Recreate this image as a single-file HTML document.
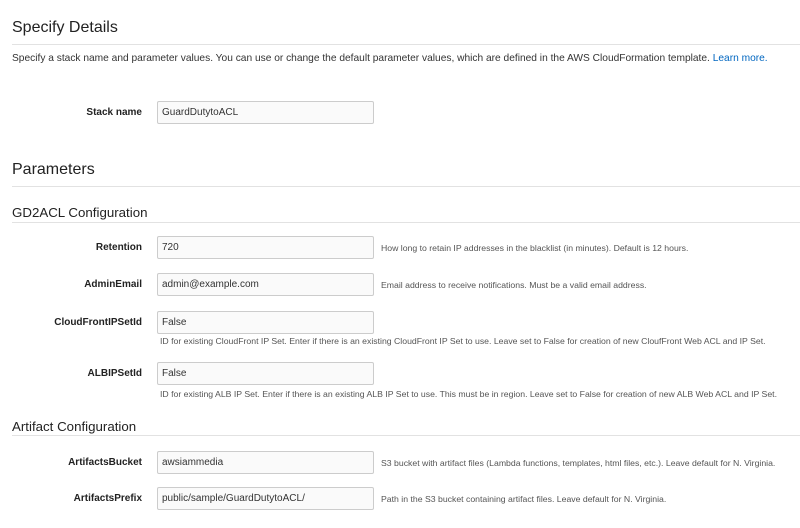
<!DOCTYPE html>
<html><head><style>
body{margin:0;width:800px;height:528px;background:#fff;font-family:"Liberation Sans",sans-serif;color:#333;position:relative;overflow:hidden}
.a{position:absolute;white-space:nowrap}
.h1{font-size:16px;color:#222}
.h2{font-size:13.3px;color:#222}
.line{position:absolute;left:12px;right:0;height:1px;background:#e2e2e2}
.lbl{position:absolute;right:658px;font-size:10px;font-weight:bold;color:#222;text-align:right}
.inp{position:absolute;left:157px;width:211px;height:21px;border:1px solid #ccc;border-radius:2px;background:#fafafa;font-size:10px;padding-left:4px;line-height:21px;color:#333}
.help{position:absolute;font-size:8.7px;color:#555;white-space:nowrap}
</style></head><body>
<div class="a h1" style="left:12px;top:19px">Specify Details</div>
<div class="line" style="top:44px"></div>
<div class="a" style="left:12px;top:53px;font-size:10.2px;color:#333">Specify a stack name and parameter values. You can use or change the default parameter values, which are defined in the AWS CloudFormation template. <span style="color:#0066c0">Learn more.</span></div>
<div class="lbl" style="top:107px">Stack name</div>
<div class="inp" style="top:101px">GuardDutytoACL</div>
<div class="a h1" style="left:12px;top:161px">Parameters</div>
<div class="line" style="top:186px"></div>
<div class="a h2" style="left:12px;top:205px">GD2ACL Configuration</div>
<div class="line" style="top:222px"></div>
<div class="lbl" style="top:242px">Retention</div>
<div class="inp" style="top:236px">720</div>
<div class="help" style="left:381px;top:243px">How long to retain IP addresses in the blacklist (in minutes). Default is 12 hours.</div>
<div class="lbl" style="top:279px">AdminEmail</div>
<div class="inp" style="top:273px">admin@example.com</div>
<div class="help" style="left:381px;top:280px">Email address to receive notifications. Must be a valid email address.</div>
<div class="lbl" style="top:317px">CloudFrontIPSetId</div>
<div class="inp" style="top:311px">False</div>
<div class="help" style="left:160px;top:336px">ID for existing CloudFront IP Set. Enter if there is an existing CloudFront IP Set to use. Leave set to False for creation of new CloufFront Web ACL and IP Set.</div>
<div class="lbl" style="top:368px">ALBIPSetId</div>
<div class="inp" style="top:362px">False</div>
<div class="help" style="left:160px;top:389px">ID for existing ALB IP Set. Enter if there is an existing ALB IP Set to use. This must be in region. Leave set to False for creation of new ALB Web ACL and IP Set.</div>
<div class="a h2" style="left:12px;top:419px">Artifact Configuration</div>
<div class="line" style="top:435px"></div>
<div class="lbl" style="top:457px">ArtifactsBucket</div>
<div class="inp" style="top:451px">awsiammedia</div>
<div class="help" style="left:381px;top:458px">S3 bucket with artifact files (Lambda functions, templates, html files, etc.). Leave default for N. Virginia.</div>
<div class="lbl" style="top:493px">ArtifactsPrefix</div>
<div class="inp" style="top:487px">public/sample/GuardDutytoACL/</div>
<div class="help" style="left:381px;top:494px">Path in the S3 bucket containing artifact files. Leave default for N. Virginia.</div>
</body></html>
